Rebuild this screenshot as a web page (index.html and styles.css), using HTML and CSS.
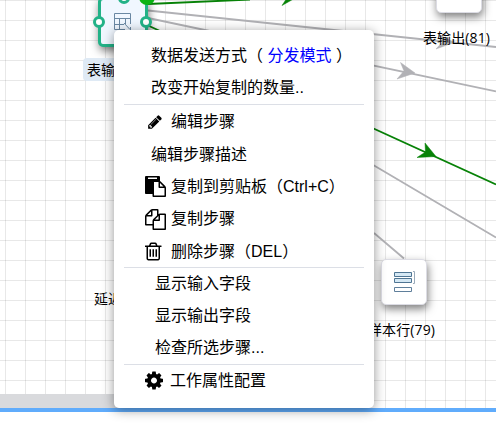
FILE: index.html
```
<!DOCTYPE html>
<html lang="zh-CN">
<head>
<meta charset="utf-8">
<title>流程编辑</title>
<link rel="stylesheet" href="styles.css">
</head>
<body>
<main class="canvas">
  <div class="scrollbar"></div>
  <svg class="edges" width="496" height="408" viewBox="0 0 496 408">
    <g class="edge-off">
      <path d="M148 10.5L496 47M148 18L496 91.3M148 32L496 237.500M374 233L404 258.500"/>
      <path class="tip" d="M454 42.500L438 34L443 41.500L436 49ZM415 73L400.500 62.500L404 71L397 79Z"/>
    </g>
    <g class="edge-on">
      <path d="M148 4L250 -.5M148 25.500L496 184.500"/>
      <path class="tip" d="M436 156.500L425 143L425.500 152L417 157.500ZM297 -3L285 -8L287 -2L282 5.500Z"/>
    </g>
  </svg>

  <div class="node node-source">
    <svg width="20" height="20" viewBox="0 0 20 20">
      <path class="glyph" d="M17.500 12V1.500H1.500V17.500H12M1.500 6.500H17.500M1.500 12.500H11M6.500 6.500V17.500M12.500 6.500V12M11 11L17 17.500M17.500 15V18"/>
    </svg>
  </div>
  <i class="port port-top"></i><i class="port port-left"></i><i class="port port-right"></i><i class="status"></i>
  <span class="label label-source">表输入(80)</span>

  <div class="node node-output"></div>
  <span class="label label-output">表输出(81)</span>

  <span class="label label-delay">延迟行</span>

  <div class="node node-sample">
    <svg width="24" height="24" viewBox="0 0 24 24">
      <path class="box" d="M2.500 2.500H19.500V6.500H2.500ZM2.500 8.500H19.500V12.500H2.500Z"/>
      <path class="glyph" d="M2.500 17.500H19.500V21.500H2.500Z"/>
      <path class="bracket" d="M21 1.500H22.500V13.500H21"/>
    </svg>
  </div>
  <span class="label label-sample">样本行(79)</span>
</main>

<nav class="menu">
  <div class="item plain">数据发送方式（ <span class="mode">分发模式</span> ）</div>
  <div class="item plain">改变开始复制的数量..</div>
  <hr>
  <div class="item tall"><svg class="icon pencil" viewBox="0 0 1792 1792"><path d="M491 1536l91-91-235-235-91 91v107h128v128h107zm523-928q0-22-22-22-10 0-17 7l-542 542q-7 7-7 17 0 22 22 22 10 0 17-7l542-542q7-7 7-17zm-54-192l416 416-832 832h-416v-416zm683 96q0 53-37 90l-166 166-416-416 166-165q36-38 90-38 53 0 91 38l235 234q37 39 37 91z"/></svg>编辑步骤</div>
  <div class="item plain tall">编辑步骤描述</div>
  <div class="item tall"><svg class="icon" viewBox="0 0 1792 1792"><path d="M768 1664h896v-640h-416q-40 0-68-28t-28-68v-416h-384v1152zm256-1440v-64q0-13-9.500-22.500t-22.500-9.500h-704q-13 0-22.500 9.500t-9.500 22.500v64q0 13 9.500 22.500t22.500 9.500h704q13 0 22.500-9.500t9.500-22.500zm256 672h299l-299-299v299zm512 128v672q0 40-28 68t-68 28h-960q-40 0-68-28t-28-68v-160h-544q-40 0-68-28t-28-68v-1344q0-40 28-68t68-28h1088q40 0 68 28t28 68v328q21 13 36 28l408 408q28 28 48 76t20 88z"/></svg>复制到剪贴板（Ctrl+C）</div>
  <div class="item tall"><svg class="icon" viewBox="0 0 1792 1792"><path d="M1696 384q40 0 68 28t28 68v1216q0 40-28 68t-68 28h-960q-40 0-68-28t-28-68v-288h-544q-40 0-68-28t-28-68v-672q0-40 20-88t48-76l408-408q28-28 76-48t88-20h416q40 0 68 28t28 68v328q68-40 128-40h416zm-544 213l-299 299h299v-299zm-640-384l-299 299h299v-299zm196 647l316-316v-416h-384v416q0 40-28 68t-68 28h-416v640h512v-256q0-40 20-88t48-76zm956 804v-1152h-384v416q0 40-28 68t-68 28h-416v640h896z"/></svg>复制步骤</div>
  <div class="item tall"><svg class="icon" viewBox="192 0 1792 1792"><path d="M704 736v576q0 14-9 23t-23 9h-64q-14 0-23-9t-9-23v-576q0-14 9-23t23-9h64q14 0 23 9t9 23zm256 0v576q0 14-9 23t-23 9h-64q-14 0-23-9t-9-23v-576q0-14 9-23t23-9h64q14 0 23 9t9 23zm256 0v576q0 14-9 23t-23 9h-64q-14 0-23-9t-9-23v-576q0-14 9-23t23-9h64q14 0 23 9t9 23zm128 724v-948h-896v948q0 22 7 40.500t14.500 27 10.500 8.500h832q3 0 10.500-8.500t14.500-27 7-40.500zm-672-1076h448l-48-117q-7-9-17-11h-317q-10 2-17 11zm928 32v64q0 14-9 23t-23 9h-96v948q0 83-47 143.500t-113 60.500h-832q-66 0-113-58.500t-47-141.500v-952h-96q-14 0-23-9t-9-23v-64q0-14 9-23t23-9h309l70-167q15-37 54-63t79-26h320q40 0 79 26t54 63l70 167h309q14 0 23 9t9 23z"/></svg>删除步骤（DEL）</div>
  <hr>
  <div class="item indent">显示输入字段</div>
  <div class="item indent">显示输出字段</div>
  <div class="item indent">检查所选步骤...</div>
  <hr>
  <div class="item last"><svg class="icon" viewBox="128 0 1792 1792"><path d="M1152 896q0-106-75-181t-181-75-181 75-75 181 75 181 181 75 181-75 75-181zm512-109v222q0 12-8 23t-20 13l-185 28q-19 54-39 91 35 50 107 138 10 12 10 25t-9 23q-27 37-99 108t-94 71q-12 0-26-9l-138-108q-44 23-91 38-16 136-29 186-7 28-36 28h-222q-14 0-24.500-8.500t-11.500-21.500l-28-184q-49-16-90-37l-141 107q-10 9-25 9-14 0-25-11-126-114-165-168-7-10-7-23 0-12 8-23 15-21 51-66.500t54-70.500q-27-50-41-99l-183-27q-13-2-21-12.500t-8-23.500v-222q0-12 8-23t19-13l186-28q14-46 39-92-40-57-107-138-10-12-10-24 0-10 9-23 26-36 98.500-107.500t94.500-71.500q13 0 26 10l138 107q44-23 91-38 16-136 29-186 7-28 36-28h222q14 0 24.500 8.500t11.500 21.500l28 184q49 16 90 37l142-107q9-9 24-9 13 0 25 10 129 119 165 170 7 8 7 22 0 12-8 23-15 21-51 66.500t-54 70.500q26 50 41 98l183 28q13 2 21 12.500t8 23.500z"/></svg>工作属性配置</div>
</nav>
</body>
</html>
```
FILE: styles.css
```
* { box-sizing: border-box; }

body {
  margin: 0;
  height: 437px;
  overflow: hidden;
  background: #fff;
  color: #000;
}

.canvas {
  position: relative;
  height: 412px;
  overflow: hidden;
  border-bottom: 4px solid #60acfc;
  background-image:
    linear-gradient(to right, rgba(0, 0, 0, .09) 1px, transparent 1px),
    linear-gradient(to bottom, rgba(0, 0, 0, .09) 1px, transparent 1px);
  background-size: 20px 20px;
  background-position: 5px 0;
}

.scrollbar {
  position: absolute;
  left: 0;
  bottom: 0;
  width: 240px;
  height: 14px;
  background: #d9dadd;
}

.edges { position: absolute; left: 0; top: 0; }
.edges path { fill: none; stroke-width: 1.8; }
.edge-off path { stroke: #b1b1b5; }
.edge-on path { stroke: #078207; }
.edges .tip { stroke-width: .5; }
.edge-off .tip { fill: #b1b1b5; }
.edge-on .tip { fill: #078207; }

.node {
  position: absolute;
  display: flex;
  align-items: center;
  justify-content: center;
  width: 46px;
  height: 46px;
  border: 1px solid #dcdce4;
  border-radius: 5px;
  background: #fff;
  box-shadow: 1px 4px 8px rgba(0, 0, 0, .5);
}
.node-source {
  left: 98px;
  top: -3px;
  width: 50px;
  height: 50px;
  border: 3px solid #22b287;
  background: #f0f7ff;
}
.node-output { left: 436px; top: -33px; }
.node-sample { left: 381px; top: 259px; }

.glyph { fill: none; stroke: #6a88a3; }
.node-sample .glyph { stroke: #5f7f9b; }
.box { fill: #d5e8f4; stroke: #4f7593; }
.bracket { fill: none; stroke: #9aabba; }

.port {
  position: absolute;
  width: 12px;
  height: 12px;
  border: 3px solid #22b287;
  border-radius: 50%;
  background: #fff;
}
.port-top { left: 118px; top: -8px; }
.port-left { left: 93px; top: 16px; }
.port-right { left: 140px; top: 16px; }
.status {
  position: absolute;
  left: 139px;
  top: -11px;
  width: 16px;
  height: 16px;
  border-radius: 50%;
  background: #0bb313;
}

.label {
  position: absolute;
  font: 14px/20px "Open Sans", "Noto Sans CJK SC", sans-serif;
  white-space: nowrap;
}
.label-source {
  left: 83px;
  top: 58px;
  padding: 2px 4px 1px;
  border-radius: 4px;
  background: #dfeaf5;
}
.label-output { left: 423px; top: 28px; letter-spacing: .1px; }
.label-delay { left: 94px; top: 289px; }
.label-sample { left: 368px; top: 320px; letter-spacing: .1px; }

.menu {
  position: absolute;
  left: 114px;
  top: 30px;
  width: 260px;
  height: 378px;
  padding: 10px;
  border-radius: 5px;
  background: #fff;
  box-shadow: 0 2px 12px rgba(0, 0, 0, .42);
  font: 16px/32px "Liberation Sans", "Noto Sans CJK SC", sans-serif;
}
.menu hr {
  height: 1px;
  margin: 0;
  border: 0;
  background: #dcdfe6;
}
.item {
  display: flex;
  align-items: center;
  height: 32px;
  padding-left: 21px;
  white-space: pre;
}
.tall { height: 32.4px; position: relative; top: 1px; }
.plain { padding-left: 27px; }
.indent { padding-left: 31px; }
.mode { color: #00f; }
.icon { width: 21px; height: 21px; margin-right: 5px; flex: none; }
.pencil { width: 16px; height: 16px; margin: 0 8px 0 2px; }
.last .icon { margin-right: 4px; }
```
